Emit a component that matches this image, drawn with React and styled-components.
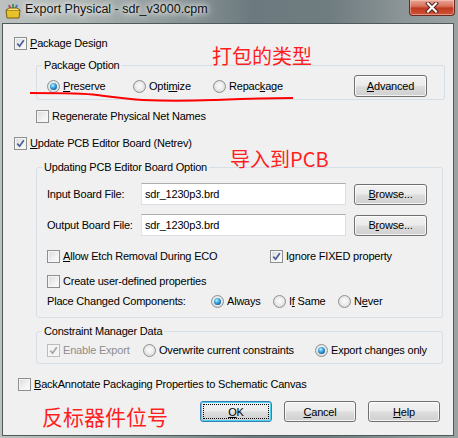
import React from 'react'
import styled, { createGlobalStyle } from 'styled-components'

const GlobalStyle = createGlobalStyle`
  html, body { margin: 0; padding: 0; background: #fff; }
  body {
    font-family: "Liberation Sans", Arial, sans-serif;
    font-size: 11px;
    letter-spacing: -0.2px;
    color: #000;
  }
`

const Window = styled.div`
  width: 458px;
  height: 438px;
  display: flex;
  flex-direction: column;
  overflow: hidden;
  background: linear-gradient(90deg, #bcc2bf 0%, #aab2b0 18%, #8b9697 38%, #6c7a7f 55%, #6f7c80 72%, #8c9597 88%, #9aa2a2 100%);
`

const TitleBar = styled.div`
  height: 23px;
  display: flex;
  align-items: flex-start;
  padding-left: 5px;
  flex-shrink: 0;
`

const TitleText = styled.span`
  margin: 2px 0 0 4px;
  font-size: 12.5px;
  line-height: 15px;
  letter-spacing: 0;
  color: #111;
  text-shadow: 0 0 5px #fff, 0 0 9px rgba(255, 255, 255, 0.9), 0 0 14px rgba(255, 255, 255, 0.7);
`

const CloseBtn = styled.div`
  margin-left: auto;
  margin-right: 3px;
  width: 46px;
  height: 16px;
  box-sizing: border-box;
  border: 1px solid #6b2a22;
  border-top: none;
  border-radius: 0 0 4px 4px;
  background: linear-gradient(#e9a797 0%, #d9745d 40%, #c03a22 55%, #cf5536 100%);
  box-shadow: inset 0 0 0 1px rgba(255, 210, 200, 0.5);
  display: flex;
  align-items: center;
  justify-content: center;
`

const Client = styled.div`
  position: relative;
  flex: 1;
  margin: 0 4px 2px 2px;
  background: #f0f0f0;
  border: 1px solid #4f5a5d;
  padding-left: 11px;
`

const Row = styled.div`
  display: flex;
  align-items: center;
  margin: ${p => p.$mt || 0}px 0 0 ${p => p.$ml || 0}px;
`

const Item = styled.label`
  display: flex;
  align-items: center;
  gap: 3px;
  height: 13px;
  line-height: 13px;
  white-space: nowrap;
  flex-shrink: 0;
  width: ${p => (p.$w ? p.$w + 'px' : 'auto')};
  color: ${p => (p.$disabled ? '#8d8d8d' : '#000')};
`

const Box = styled.span`
  width: 13px;
  height: 13px;
  box-sizing: border-box;
  flex-shrink: 0;
  border: 1px solid ${p => (p.$disabled ? '#bcbcbc' : '#8e8f8f')};
  background: ${p => (p.$disabled ? '#f4f4f4' : 'linear-gradient(135deg, #d8dade 0%, #f2f2f2 60%, #fdfdfd 100%)')};
  box-shadow: inset 0 0 0 1px #f6f6f6;
  display: flex;
  align-items: center;
  justify-content: center;
`

const RadioDot = styled.span`
  width: 13px;
  height: 13px;
  box-sizing: border-box;
  flex-shrink: 0;
  border-radius: 50%;
  border: 1px solid #8e8f8f;
  background: radial-gradient(circle at 50% 45%, #fdfdfd 0%, #ececec 45%, #c9cacb 100%);
  display: flex;
  align-items: center;
  justify-content: center;
  &::after {
    content: '';
    display: ${p => (p.$on ? 'block' : 'none')};
    width: 7px;
    height: 7px;
    border-radius: 50%;
    background: radial-gradient(circle at 40% 35%, #c8f2ff 0%, #44aee6 35%, #12629f 75%, #0a3c6e 100%);
  }
`

const Group = styled.fieldset`
  margin: ${p => p.$mt}px ${p => p.$mr}px 0 22px;
  padding: 0;
  border: 1px solid #d5dfe5;
  border-radius: 3px;
  min-width: 0;
`

const Legend = styled.legend`
  margin-left: 5px;
  padding: 0 2px;
  line-height: 14px;
  font-size: 11px;
`

const GroupBody = styled.div`
  padding: ${p => p.$pad};
  display: flex;
  flex-direction: column;
`

const FieldLabel = styled.span`
  width: ${p => p.$w}px;
  flex-shrink: 0;
  line-height: 13px;
  white-space: nowrap;
`

const TextField = styled.div`
  width: 205px;
  height: 22px;
  box-sizing: border-box;
  border: 1px solid #dbdfe6;
  border-top-color: #abadb3;
  border-left-color: #e2e3ea;
  background: #fff;
  padding: 0 3px;
  display: flex;
  align-items: center;
  margin-right: 8px;
`

const Button = styled.button`
  position: relative;
  width: ${p => p.$w || 73}px;
  height: ${p => p.$h || 21}px;
  box-sizing: border-box;
  flex-shrink: 0;
  padding: 0;
  font-family: "Liberation Sans", Arial, sans-serif;
  font-size: 11px;
  letter-spacing: -0.2px;
  color: #000;
  border: 1px solid ${p => (p.$default ? '#3c7fb1' : '#707070')};
  border-radius: 3px;
  background: linear-gradient(#f2f2f2 0%, #ebebeb 48%, #dddddd 52%, #cfcfcf 100%);
  box-shadow: inset 0 0 0 1px ${p => (p.$default ? '#48d0f2' : 'rgba(255,255,255,0.75)')};
  &::after {
    content: '';
    display: ${p => (p.$default ? 'block' : 'none')};
    position: absolute;
    inset: 2px;
    border: 1px dotted #000;
  }
`

const ButtonRow = styled.div`
  display: flex;
  justify-content: flex-end;
  gap: 12px;
  margin-top: 10px;
  padding-right: 13px;
`

const Note = styled.div`
  position: absolute;
  left: ${p => p.$x}px;
  top: ${p => p.$y}px;
  font-family: "Noto Sans CJK SC", "Liberation Sans", sans-serif;
  font-size: ${p => p.$size || 20}px;
  line-height: 1;
  letter-spacing: 0;
  color: #ff1e1e;
  white-space: nowrap;
  pointer-events: none;
`

const Scribble = styled.svg`
  position: absolute;
  left: 0;
  top: 0;
  pointer-events: none;
`

const Check = ({ checked, disabled }) => (
  <Box $disabled={disabled}>
    {checked && (
      <svg width="9" height="9" viewBox="0 0 9 9">
        <path d="M1.3 4.6 L3.6 7.2 L7.8 1.2" fill="none" stroke={disabled ? '#a6a6a6' : '#4a5d96'} strokeWidth="1.7" />
      </svg>
    )}
  </Box>
)

const CheckItem = ({ checked, disabled, w, children }) => (
  <Item $w={w} $disabled={disabled}>
    <Check checked={checked} disabled={disabled} />
    <span>{children}</span>
  </Item>
)

const RadioItem = ({ on, w, children }) => (
  <Item $w={w}>
    <RadioDot $on={on} />
    <span>{children}</span>
  </Item>
)

const AppIcon = () => (
  <svg width="16" height="16" viewBox="0 0 16 16" style={{ marginTop: 3 }}>
    <path d="M4 2 L6 7" stroke="#c03aa8" strokeWidth="2" />
    <path d="M8 1 L8 7" stroke="#3aa04a" strokeWidth="2" />
    <path d="M12 2 L10 7" stroke="#3a6fd0" strokeWidth="2" />
    <path d="M1 7 L15 7 L14 15 L2 15 Z" fill="#e6c22a" stroke="#7a5a10" strokeWidth="1" />
    <path d="M1 7 L4 5 L12 5 L15 7" fill="#f6e27a" stroke="#7a5a10" strokeWidth="1" />
  </svg>
)

export default function App() {
  return (
    <>
      <GlobalStyle />
      <Window>
        <TitleBar>
          <AppIcon />
          <TitleText>Export Physical - sdr_v3000.cpm</TitleText>
          <CloseBtn>
            <svg width="14" height="11" viewBox="0 0 14 11">
              <path d="M3 1.5 L11 9.5 M11 1.5 L3 9.5" stroke="#4a1a14" strokeWidth="4" strokeLinecap="square" />
              <path d="M3 1.5 L11 9.5 M11 1.5 L3 9.5" stroke="#fff" strokeWidth="2.2" strokeLinecap="square" />
            </svg>
          </CloseBtn>
        </TitleBar>

        <Client>
          <Row $mt={13}>
            <CheckItem checked><u>P</u>ackage Design</CheckItem>
          </Row>

          <Group $mt={8} $mr={8}>
            <Legend>Package Option</Legend>
            <GroupBody $pad="3px 17px 2px 10px">
              <Row>
                <RadioItem on w={86}><u>P</u>reserve</RadioItem>
                <RadioItem w={80}>Opti<u>m</u>ize</RadioItem>
                <Item style={{ flex: 1 }}>
                  <RadioDot />
                  <span>Repac<u>k</u>age</span>
                </Item>
                <Button $h={22}><u>A</u>dvanced</Button>
              </Row>
            </GroupBody>
          </Group>

          <Row $mt={10} $ml={22}>
            <CheckItem>Regenerate Physical Net Names</CheckItem>
          </Row>

          <Row $mt={14}>
            <CheckItem checked><u>U</u>pdate PCB Editor Board (Netrev)</CheckItem>
          </Row>

          <Group $mt={10} $mr={10}>
            <Legend>Updating PCB Editor Board Option</Legend>
            <GroupBody $pad="9px 0 9px 10px">
              <Row>
                <FieldLabel $w={94}>Input Board File:</FieldLabel>
                <TextField>sdr_1230p3.brd</TextField>
                <Button><u>B</u>rowse...</Button>
              </Row>
              <Row $mt={9}>
                <FieldLabel $w={94}>Output Board File:</FieldLabel>
                <TextField>sdr_1230p3.brd</TextField>
                <Button>B<u>r</u>owse...</Button>
              </Row>
              <Row $mt={14}>
                <CheckItem w={223}><u>A</u>llow Etch Removal During ECO</CheckItem>
                <CheckItem checked>Ignore FIXED property</CheckItem>
              </Row>
              <Row $mt={12}>
                <CheckItem>Create user-defined properties</CheckItem>
              </Row>
              <Row $mt={7}>
                <FieldLabel $w={164}>Place Changed Components:</FieldLabel>
                <RadioItem on w={62}>Always</RadioItem>
                <RadioItem w={65}>I<u>f</u> Same</RadioItem>
                <RadioItem>N<u>e</u>ver</RadioItem>
              </Row>
            </GroupBody>
          </Group>

          <Group $mt={6} $mr={10}>
            <Legend>Constraint Manager Data</Legend>
            <GroupBody $pad="6px 0 6px 10px">
              <Row>
                <CheckItem checked disabled w={96}>Enable Export</CheckItem>
                <RadioItem w={172}>Overwrite current constraints</RadioItem>
                <RadioItem on>Export changes only</RadioItem>
              </Row>
            </GroupBody>
          </Group>

          <Row $mt={14} $ml={4}>
            <CheckItem><u>B</u>ackAnnotate Packaging Properties to Schematic Canvas</CheckItem>
          </Row>

          <ButtonRow>
            <Button $w={72} $default><u>O</u>K</Button>
            <Button $w={72}><u>C</u>ancel</Button>
            <Button $w={72}><u>H</u>elp</Button>
          </ButtonRow>

          <Note $x={209} $y={22}>打包的类型</Note>
          <Note $x={227} $y={125}>导入到PCB</Note>
          <Note $x={39} $y={382} $size={21}>反标器件位号</Note>
          <Scribble width="320" height="90">
            <path
              d="M27 69 C 50 69, 80 69, 94 71 C 110 73, 125 75, 140 76 C 160 77, 185 77, 210 76 C 235 75, 255 74, 290 74"
              fill="none"
              stroke="#ff0000"
              strokeWidth="2"
            />
          </Scribble>
        </Client>
      </Window>
    </>
  )
}
